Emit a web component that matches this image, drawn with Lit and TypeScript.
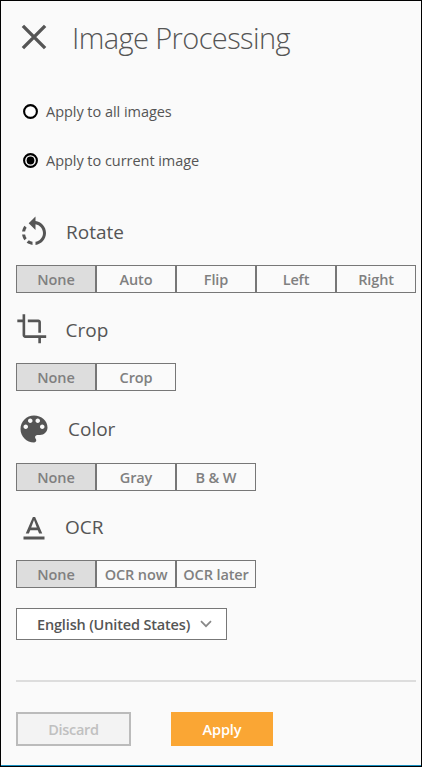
import { LitElement, html, css, svg } from "lit";
import { customElement, state } from "lit/decorators.js";

interface Group {
  id: string;
  title: string;
  options: string[];
}

const ICONS: Record<string, string> = {
  rotate:
    "M7.11 8.53L5.7 7.11C4.8 8.27 4.24 9.61 4.07 11h2.02c.14-.87.49-1.72 1.02-2.47zM6.09 13H4.07c.17 1.39.72 2.73 1.62 3.89l1.41-1.42c-.52-.75-.87-1.59-1.01-2.47zm1.01 5.32c1.16.9 2.51 1.44 3.9 1.61V17.9c-.87-.15-1.71-.49-2.46-1.03L7.1 18.32zM13 4.07V1L8.45 5.55 13 10V6.09c2.84.48 5 2.94 5 5.91s-2.16 5.43-5 5.91v2.02c3.95-.49 7-3.85 7-7.93s-3.05-7.44-7-7.93z",
  crop: "M17 15h2V7c0-1.1-.9-2-2-2H9v2h8v8zM7 17V1H5v4H1v2h4v10c0 1.1.9 2 2 2h10v4h2v-4h4v-2H7z",
  color:
    "M12 3c-4.97 0-9 4.03-9 9s4.03 9 9 9c.83 0 1.5-.67 1.5-1.5 0-.39-.15-.74-.39-1.01-.23-.26-.38-.61-.38-.99 0-.83.67-1.5 1.5-1.5H16c2.76 0 5-2.24 5-5 0-4.42-4.03-8-9-8zm-5.5 9c-.83 0-1.5-.67-1.5-1.5S5.67 9 6.5 9 8 9.67 8 10.5 7.33 12 6.5 12zm3-4C8.67 8 8 7.33 8 6.5S8.67 5 9.5 5s1.5.67 1.5 1.5S10.33 8 9.5 8zm5 0c-.83 0-1.5-.67-1.5-1.5S13.67 5 14.5 5s1.5.67 1.5 1.5S15.33 8 14.5 8zm3 4c-.83 0-1.5-.67-1.5-1.5S16.67 9 17.5 9s1.5.67 1.5 1.5-.67 1.5-1.5 1.5z",
  ocr: "M5 17v2h14v-2H5zm4.5-4.2h5l.9 2.2h2.1L12.75 4h-1.5L6.5 15h2.1l.9-2.2zM12 5.98L13.87 11h-3.74L12 5.98z",
};

const GROUPS: Group[] = [
  { id: "rotate", title: "Rotate", options: ["None", "Auto", "Flip", "Left", "Right"] },
  { id: "crop", title: "Crop", options: ["None", "Crop"] },
  { id: "color", title: "Color", options: ["None", "Gray", "B & W"] },
  { id: "ocr", title: "OCR", options: ["None", "OCR now", "OCR later"] },
];

@customElement("app-root")
export class AppRoot extends LitElement {
  @state() private scope = "current";
  @state() private chosen: Record<string, string> = {
    rotate: "None",
    crop: "None",
    color: "None",
    ocr: "None",
  };

  static styles = css`
    :host {
      display: block;
      font-family: "Open Sans", "Noto Sans", sans-serif;
      color: #555;
    }
    * {
      box-sizing: border-box;
    }
    button {
      font: inherit;
      letter-spacing: inherit;
      margin: 0;
      padding: 0;
      border-radius: 0;
      white-space: nowrap;
    }
    svg {
      display: block;
      flex: none;
    }
    .panel {
      height: 767px;
      border: 1px solid #000;
      box-shadow: inset 0 -1px #168fc0;
      background: #fafafa;
      padding: 0 5px 0 15px;
      display: flex;
      flex-direction: column;
    }
    .header {
      display: flex;
      align-items: center;
      height: 75px;
      padding-left: 5px;
    }
    .close {
      border: 0;
      background: none;
      width: 26px;
      height: 26px;
      margin-top: -3px;
    }
    .title {
      margin: -2px 0 0 25px;
      font-size: 29px;
      font-weight: 300;
      line-height: 40px;
      letter-spacing: -0.6px;
    }
    .radio {
      display: flex;
      align-items: center;
      height: 49px;
      padding-left: 7px;
      font-size: 14.5px;
      letter-spacing: -0.04px;
    }
    .scopes {
      padding-top: 11px;
      height: 136px;
    }
    .dial {
      margin-right: 8px;
    }
    .caption {
      display: flex;
      align-items: center;
      height: 36px;
      font-size: 19px;
    }
    .caption h2 {
      margin: 0;
      font: inherit;
    }
    .rotate { height: 98px; padding-top: 3px; }
    .crop { height: 101px; }
    .color { height: 100px; }
    .ocr { height: 97px; }
    .rotate .caption { gap: 14px; margin-bottom: 14px; }
    .crop .caption { gap: 18px; height: 37px; margin-bottom: 16px; }
    .color .caption { gap: 16px; height: 35px; margin-bottom: 17px; }
    .ocr .caption { gap: 13px; margin-bottom: 13px; }
    .rotate h2 { margin-top: -2px; }
    .crop h2 { margin-top: 2px; }
    .ocr h2 { margin-top: -4px; }
    .options {
      display: flex;
      letter-spacing: -0.12px;
    }
    .option {
      width: 80px;
      height: 28px;
      padding-top: 1px;
      border: 1px solid #777;
      background: transparent;
      color: #808080;
      font-size: 14.5px;
      font-weight: 600;
      line-height: 25px;
    }
    .option.on {
      background: #ddd;
    }
    .language {
      display: flex;
      align-items: center;
      width: 211px;
      height: 32px;
      flex: none;
      padding: 0 14px 0 20px;
      justify-content: space-between;
      border: 1px solid #777;
      background: #fff;
      color: #555;
      font-size: 14.5px;
      font-weight: 600;
      letter-spacing: -0.16px;
    }
    .rule {
      height: 2px;
      margin-top: 40px;
      background: #ddd;
    }
    .actions {
      display: flex;
      gap: 40px;
      margin-top: 30px;
      font-size: 14.5px;
      font-weight: 600;
      letter-spacing: -0.1px;
    }
    .discard {
      width: 115px;
      height: 34px;
      border: 2px solid #bbb;
      background: #f3f3f3;
      color: #c0c0c0;
      letter-spacing: -0.3px;
    }
    .apply {
      width: 102px;
      height: 34px;
      border: 0;
      background: #faa634;
      color: #fff;
    }
  `;

  private radio(id: string, text: string) {
    const on = this.scope === id;
    return html`<div class="radio" @click=${() => (this.scope = id)}>
      <svg class="dial" width="15" height="15" viewBox="0 0 15 15">
        <circle cx="7.5" cy="7.5" r="6.4" fill="#fff" stroke="#000" stroke-width="2.1"></circle>
        ${on ? svg`<circle cx="7.5" cy="7.5" r="3.9" fill="#000"></circle>` : ""}
      </svg>
      <span>${text}</span>
    </div>`;
  }

  private group(g: Group) {
    const size = g.id === "crop" ? 31.5 : 36;
    return html`<section class=${g.id}>
      <div class="caption">
        <svg width=${size} height=${size} viewBox="0 0 24 24" fill="#555"><path d=${ICONS[g.id]}></path></svg>
        <h2>${g.title}</h2>
      </div>
      <div class="options">
        ${g.options.map(
          (o) => html`<button
            class="option ${this.chosen[g.id] === o ? "on" : ""}"
            @click=${() => (this.chosen = { ...this.chosen, [g.id]: o })}
          >${o}</button>`
        )}
      </div>
    </section>`;
  }

  render() {
    return html`<main class="panel">
      <header class="header">
        <button class="close" aria-label="Close">
          <svg width="26" height="26" viewBox="0 0 26 26" stroke="#555" stroke-width="3.4">
            <path d="M1.9 1.9L24.1 24.1M24.1 1.9L1.9 24.1"></path>
          </svg>
        </button>
        <h1 class="title">Image Processing</h1>
      </header>
      <div class="scopes">
        ${this.radio("all", "Apply to all images")} ${this.radio("current", "Apply to current image")}
      </div>
      ${GROUPS.map((g) => this.group(g))}
      <button class="language">
        <span>English (United States)</span>
        <svg width="12" height="8" viewBox="0 0 12 8" fill="none" stroke="#888" stroke-width="1.7">
          <path d="M1 1.2L6 6.2L11 1.2"></path>
        </svg>
      </button>
      <div class="rule"></div>
      <footer class="actions">
        <button class="discard">Discard</button>
        <button class="apply">Apply</button>
      </footer>
    </main>`;
  }
}
